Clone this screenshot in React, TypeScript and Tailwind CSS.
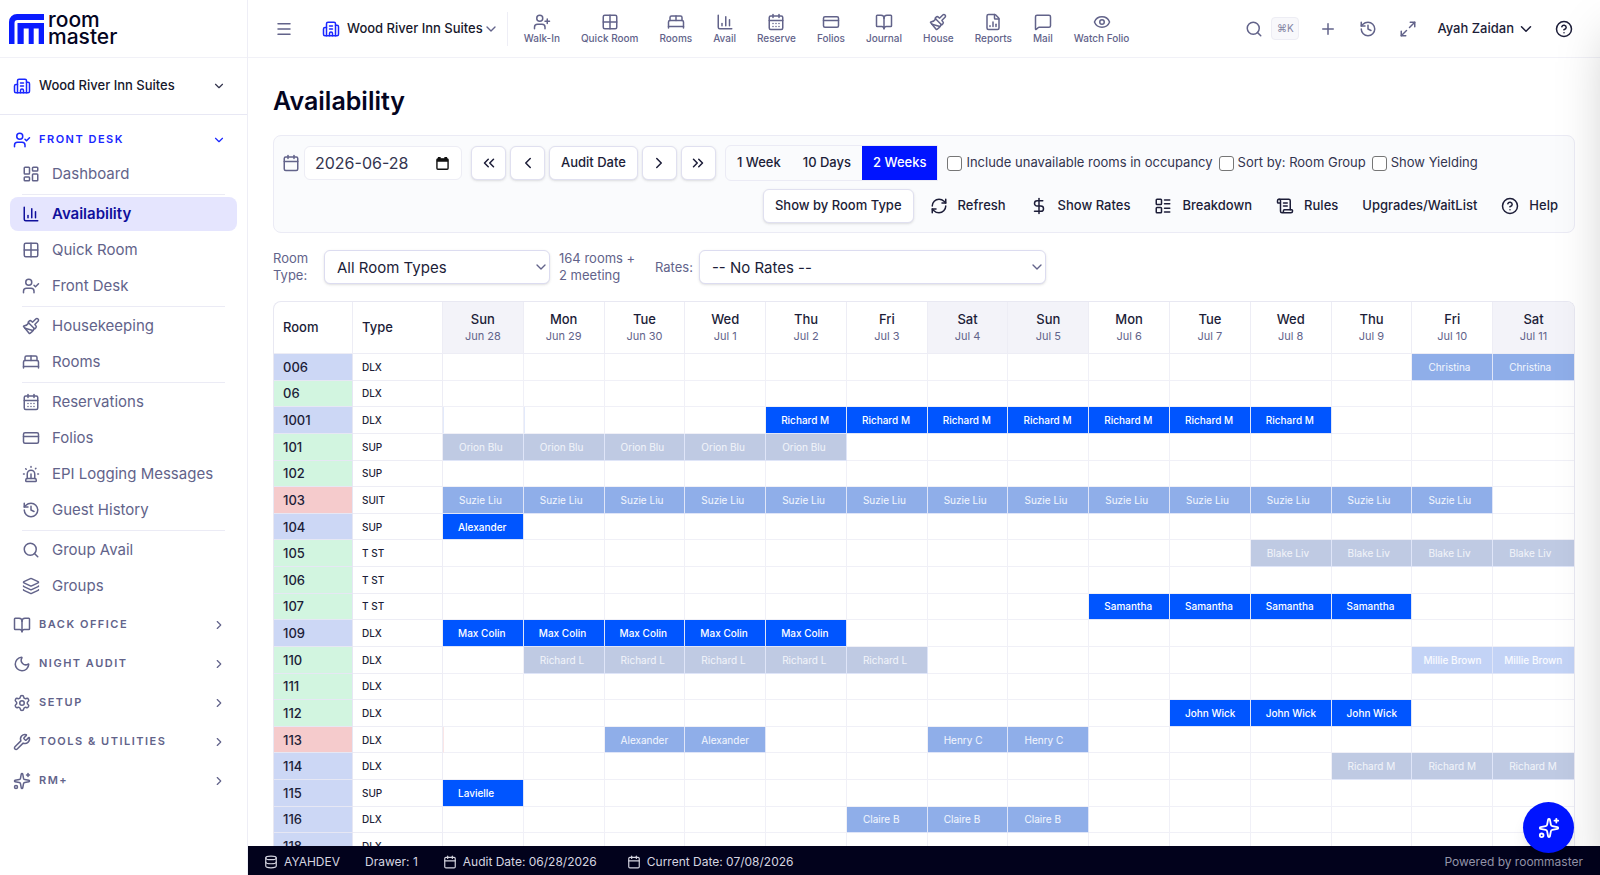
import type { ComponentType, ReactNode } from 'react'
import {
  BedDouble, BookOpen, Building2, Calendar, CalendarDays, ChartColumn, ChevronDown, ChevronLeft,
  ChevronRight, ChevronsLeft, ChevronsRight, CircleHelp, CreditCard, Database, DollarSign, Eye,
  FileChartColumn, Grid2x2, History, Layers, LayoutDashboard, LayoutList, Maximize2, Menu,
  MessageSquare, Moon, Paintbrush, Plus, RefreshCw, ScrollText, Search, Settings, Siren, Sparkles,
  UserCheck, UserPlus, Wrench,
} from 'lucide-react'

type Icon = ComponentType<{ className?: string }>

const QUICK_LINKS: { label: string; icon: Icon }[] = [
  { label: 'Walk-In', icon: UserPlus },
  { label: 'Quick Room', icon: Grid2x2 },
  { label: 'Rooms', icon: BedDouble },
  { label: 'Avail', icon: ChartColumn },
  { label: 'Reserve', icon: CalendarDays },
  { label: 'Folios', icon: CreditCard },
  { label: 'Journal', icon: BookOpen },
  { label: 'House', icon: Paintbrush },
  { label: 'Reports', icon: FileChartColumn },
  { label: 'Mail', icon: MessageSquare },
  { label: 'Watch Folio', icon: Eye },
]

const MENU: { label: string; icon: Icon }[][] = [
  [{ label: 'Dashboard', icon: LayoutDashboard }],
  [
    { label: 'Availability', icon: ChartColumn },
    { label: 'Quick Room', icon: Grid2x2 },
    { label: 'Front Desk', icon: UserCheck },
  ],
  [
    { label: 'Housekeeping', icon: Paintbrush },
    { label: 'Rooms', icon: BedDouble },
  ],
  [
    { label: 'Reservations', icon: CalendarDays },
    { label: 'Folios', icon: CreditCard },
    { label: 'EPI Logging Messages', icon: Siren },
    { label: 'Guest History', icon: History },
  ],
  [
    { label: 'Group Avail', icon: Search },
    { label: 'Groups', icon: Layers },
  ],
]

const SECTIONS: { label: string; icon: Icon }[] = [
  { label: 'BACK OFFICE', icon: BookOpen },
  { label: 'NIGHT AUDIT', icon: Moon },
  { label: 'SETUP', icon: Settings },
  { label: 'TOOLS & UTILITIES', icon: Wrench },
  { label: 'RM+', icon: Sparkles },
]

const DAYS = [
  ['Sun', 'Jun 28'], ['Mon', 'Jun 29'], ['Tue', 'Jun 30'], ['Wed', 'Jul 1'], ['Thu', 'Jul 2'],
  ['Fri', 'Jul 3'], ['Sat', 'Jul 4'], ['Sun', 'Jul 5'], ['Mon', 'Jul 6'], ['Tue', 'Jul 7'],
  ['Wed', 'Jul 8'], ['Thu', 'Jul 9'], ['Fri', 'Jul 10'], ['Sat', 'Jul 11'],
]

const ROOM_TONES = {
  blue: 'bg-[#ccd7f5]',
  green: 'bg-[#d2f5e0]',
  red: 'bg-[#f5cbcc]',
}

const STAY_TONES = {
  inHouse: 'bg-[#0055ff] pl-[15px] font-medium text-white',
  reserved: 'bg-[#8faee9] pl-4 text-white/90',
  departed: 'bg-[#bfcae3] pl-4 text-white/80',
  tentative: 'bg-[#c3d3f6] pl-[11px] font-medium text-white/90',
}

type Stay = { guest: string; from: number; to: number; tone: keyof typeof STAY_TONES }
type RoomRow = {
  room: string
  type: string
  tone: keyof typeof ROOM_TONES
  stays?: Stay[]
  // days whose left edge carries a thin coloured marker
  marked?: { days: number[]; className: string }
}

const ROOMS: RoomRow[] = [
  { room: '006', type: 'DLX', tone: 'blue', stays: [{ guest: 'Christina', from: 12, to: 13, tone: 'reserved' }] },
  { room: '06', type: 'DLX', tone: 'green' },
  {
    room: '1001',
    type: 'DLX',
    tone: 'blue',
    stays: [{ guest: 'Richard M', from: 4, to: 10, tone: 'inHouse' }],
    marked: { days: [0, 1], className: 'border-l border-l-[#e3eafb]' },
  },
  { room: '101', type: 'SUP', tone: 'green', stays: [{ guest: 'Orion Blu', from: 0, to: 4, tone: 'departed' }] },
  { room: '102', type: 'SUP', tone: 'green' },
  { room: '103', type: 'SUIT', tone: 'red', stays: [{ guest: 'Suzie Liu', from: 0, to: 12, tone: 'reserved' }] },
  { room: '104', type: 'SUP', tone: 'blue', stays: [{ guest: 'Alexander', from: 0, to: 0, tone: 'inHouse' }] },
  { room: '105', type: 'T ST', tone: 'green', stays: [{ guest: 'Blake Liv', from: 10, to: 13, tone: 'departed' }] },
  { room: '106', type: 'T ST', tone: 'green' },
  { room: '107', type: 'T ST', tone: 'green', stays: [{ guest: 'Samantha', from: 8, to: 11, tone: 'inHouse' }] },
  { room: '109', type: 'DLX', tone: 'blue', stays: [{ guest: 'Max Colin', from: 0, to: 4, tone: 'inHouse' }] },
  {
    room: '110',
    type: 'DLX',
    tone: 'green',
    stays: [
      { guest: 'Richard L', from: 1, to: 5, tone: 'departed' },
      { guest: 'Millie Brown', from: 12, to: 13, tone: 'tentative' },
    ],
  },
  { room: '111', type: 'DLX', tone: 'green' },
  { room: '112', type: 'DLX', tone: 'green', stays: [{ guest: 'John Wick', from: 9, to: 11, tone: 'inHouse' }] },
  {
    room: '113',
    type: 'DLX',
    tone: 'red',
    stays: [
      { guest: 'Alexander', from: 2, to: 3, tone: 'reserved' },
      { guest: 'Henry C', from: 6, to: 7, tone: 'reserved' },
    ],
    marked: { days: [0], className: 'border-l border-l-[#fae6e7]' },
  },
  { room: '114', type: 'DLX', tone: 'blue', stays: [{ guest: 'Richard M', from: 11, to: 13, tone: 'departed' }] },
  { room: '115', type: 'SUP', tone: 'blue', stays: [{ guest: 'Lavielle', from: 0, to: 0, tone: 'inHouse' }] },
  { room: '116', type: 'DLX', tone: 'blue', stays: [{ guest: 'Claire B', from: 5, to: 7, tone: 'reserved' }] },
  { room: '118', type: 'DLX', tone: 'blue' },
]

function Logo() {
  return (
    <a href="#" aria-label="roommaster home" className="flex h-[58px] shrink-0 items-center gap-1 border-b border-[#f1f1f7] pl-[9px]">
      <svg viewBox="0 0 35 30" className="h-[30px] w-[35px] shrink-0" fill="#0a1cff">
        <path d="M0 30V8a8 8 0 0 1 8-8h27v6H8.500a3 3 0 0 0-3 3v21z" />
        <path d="M8.500 30V9H35v21h-5.300V14.500h-5V30h-5V14.500h-5V30z" />
      </svg>
      <span className="flex flex-col pb-0.5 text-[21px] leading-[17px] font-medium text-[#04051f]">
        <span>room</span>
        <span>master</span>
      </span>
    </a>
  )
}

function Sidebar() {
  return (
    <aside className="flex w-[248px] shrink-0 flex-col border-r border-[#eeeef6] bg-white">
      <Logo />
      <button type="button" className="flex h-[57px] shrink-0 items-center border-b border-[#e8e8f4] pr-[21px] pl-[13px]">
        <Building2 className="size-[18px] text-[#1a27ff]" />
        <span className="ml-2 text-[13px] font-medium text-[#17182b]">Wood River Inn Suites</span>
        <ChevronDown className="ml-auto size-3.5 text-[#33344d]" />
      </button>
      <nav className="flex flex-col gap-1.5 pt-2">
        <div className="-mb-0.5">
          <button type="button" className="flex h-[33px] w-full items-center pr-[21px] pl-[13px] text-[#1a27ff]">
            <UserCheck className="size-[18px]" />
            <span className="ml-2 text-[11px] font-semibold tracking-[1.5px]">FRONT DESK</span>
            <ChevronDown className="ml-auto size-3.5" />
          </button>
          {MENU.map((items, i) => (
            <div key={i}>
              {i > 0 && <hr className="mx-[22px] mt-0.5 mb-px h-px border-0 bg-[#ebebf5]" />}
              {items.map(({ label, icon: ItemIcon }) => (
                <div key={label} className="px-2.5 py-px">
                  <a
                    href="#"
                    className={
                      label === 'Availability'
                        ? 'flex h-[34px] items-center gap-3 rounded-lg bg-[#e5e5fe] pl-3 text-[15px] font-semibold text-[#10109c]'
                        : 'flex h-[34px] items-center gap-3 rounded-lg pl-3 text-[15px] text-[#62638a]'
                    }
                  >
                    <ItemIcon className="size-[18px]" />
                    {label}
                  </a>
                </div>
              ))}
            </div>
          ))}
        </div>
        {SECTIONS.map(({ label, icon: SectionIcon }) => (
          <button key={label} type="button" className="flex h-[33px] w-full items-center pr-[21px] pl-[13px] text-[#62638a]">
            <SectionIcon className="size-[18px]" />
            <span className="ml-2 text-[11px] font-semibold tracking-[1.5px]">{label}</span>
            <ChevronRight className="ml-auto size-3.5" />
          </button>
        ))}
      </nav>
    </aside>
  )
}

function TopBar() {
  return (
    <header className="flex h-[58px] shrink-0 items-center border-b border-[#f1f1f7] pr-[27px] pl-[27px] text-[#62638a]">
      <button type="button" aria-label="Toggle menu">
        <Menu className="size-[18px]" />
      </button>
      <button type="button" className="ml-[29px] flex items-center whitespace-nowrap">
        <Building2 className="size-[18px] text-[#1a27ff]" />
        <span className="ml-[7px] text-[13px] font-medium text-[#17182b]">Wood River Inn Suites</span>
        <ChevronDown className="size-4" />
      </button>
      <nav className="ml-2 flex h-[34px] items-center gap-[5px] border-l border-[#eeeef6] pl-2">
        {QUICK_LINKS.map(({ label, icon: LinkIcon }) => (
          <a key={label} href="#" className="flex flex-col items-center px-2 text-[10px] leading-[14px] font-medium whitespace-nowrap">
            <LinkIcon className="size-[18px]" />
            {label}
          </a>
        ))}
      </nav>
      <div className="ml-auto flex items-center text-[#62638a]">
        <button type="button" className="flex items-center gap-2" aria-label="Search">
          <Search className="size-[18px]" />
          <kbd className="flex h-[23px] w-7 items-center justify-center rounded border border-[#ededf4] bg-[#f8f8fb] font-[Inter] text-[10px] text-[#8384a3]">
            ⌘K
          </kbd>
        </button>
        <button type="button" aria-label="Add" className="ml-5">
          <Plus className="size-[18px]" />
        </button>
        <button type="button" aria-label="History" className="ml-[22px]">
          <History className="size-[18px]" />
        </button>
        <button type="button" aria-label="Full screen" className="ml-[22px]">
          <Maximize2 className="size-[18px]" />
        </button>
        <button type="button" className="ml-5 flex items-center gap-[3px] text-[13px] font-medium whitespace-nowrap text-[#1c1d38]">
          Ayah Zaidan
          <ChevronDown className="size-[18px]" />
        </button>
        <button type="button" aria-label="Help" className="ml-5 text-[#1c1d38]">
          <CircleHelp className="size-[18px]" />
        </button>
      </div>
    </header>
  )
}

function NavButton({ label, children }: { label?: string; children: ReactNode }) {
  return (
    <button
      type="button"
      aria-label={label}
      className="flex h-[34px] min-w-[35px] items-center justify-center rounded-md border border-[#e0e0f0] bg-white text-[13px] font-medium whitespace-nowrap text-[#1c1d38] shadow-sm"
    >
      {children}
    </button>
  )
}

function GhostButton({ icon: ButtonIcon, children }: { icon?: Icon; children: ReactNode }) {
  return (
    <button type="button" className="flex h-[34px] items-center gap-2.5 px-2 text-[13px] font-medium whitespace-nowrap text-[#1c1d38]">
      {ButtonIcon && <ButtonIcon className="size-[18px]" />}
      {children}
    </button>
  )
}

function CheckOption({ label }: { label: string }) {
  return (
    <label className="flex items-center gap-1 text-[13px] whitespace-nowrap text-[#33344f]">
      <input type="checkbox" className="size-[15px] appearance-none rounded-[3px] border border-[#767676] bg-white" />
      {label}
    </label>
  )
}

function Toolbar() {
  return (
    <section className="rounded-lg border border-[#ebebf5] bg-[#fafbfd] px-2 py-[9px]">
      <div className="flex items-center gap-[9px]">
        <div className="flex items-center gap-1">
          <Calendar className="size-[18px] text-[#62638a]" />
          <div className="flex h-[34px] w-[158px] items-center justify-between rounded-md border border-[#ededf5] bg-white pr-3 pl-2.5">
            <input type="text" aria-label="Start date" defaultValue="2026-06-28" className="w-[110px] bg-transparent text-base text-[#33344f] outline-none" />
            <button type="button" aria-label="Open calendar">
              <svg viewBox="0 0 14 14" className="size-[13px]" fill="none" stroke="#111" strokeWidth="1.5">
                <rect x="1" y="2" width="12" height="11.2" rx="1" />
                <path d="M1 3.5h12M3.5 0v3M10.5 0v3" strokeWidth="3" />
              </svg>
            </button>
          </div>
        </div>
        <div className="flex items-center gap-1">
          <NavButton label="Back one period"><ChevronsLeft className="size-[18px]" /></NavButton>
          <NavButton label="Back one day"><ChevronLeft className="size-[18px]" /></NavButton>
          <NavButton><span className="px-[11px]">Audit Date</span></NavButton>
          <NavButton label="Forward one day"><ChevronRight className="size-[18px]" /></NavButton>
          <NavButton label="Forward one period"><ChevronsRight className="size-[18px]" /></NavButton>
        </div>
        <div className="flex h-9 overflow-hidden rounded-l-md border border-[#ebebf5] text-[13px] font-medium whitespace-nowrap text-[#1c1d38]">
          <button type="button" className="px-[11px]">1 Week</button>
          <button type="button" className="px-[11px]">10 Days</button>
          <button type="button" className="bg-[#0014ff] px-[11px] text-white">2 Weeks</button>
        </div>
        <div className="flex items-center gap-1.5">
          <CheckOption label="Include unavailable rooms in occupancy" />
          <CheckOption label="Sort by: Room Group" />
          <CheckOption label="Show Yielding" />
        </div>
      </div>
      <div className="mt-2 flex items-center justify-end gap-2">
        <NavButton><span className="px-[11px]">Show by Room Type</span></NavButton>
        <GhostButton icon={RefreshCw}>Refresh</GhostButton>
        <GhostButton icon={DollarSign}>Show Rates</GhostButton>
        <GhostButton icon={LayoutList}>Breakdown</GhostButton>
        <GhostButton icon={ScrollText}>Rules</GhostButton>
        <GhostButton>Upgrades/WaitList</GhostButton>
        <GhostButton icon={CircleHelp}>Help</GhostButton>
      </div>
    </section>
  )
}

function Filters() {
  return (
    <div className="mt-[17px] flex items-center text-[13px] leading-[17px] text-[#62638a]">
      <label htmlFor="roomType" className="w-[51px]">Room Type:</label>
      <div className="relative">
        <select id="roomType" className="h-[34px] w-[226px] appearance-none rounded-md border border-[#dcdcf0] bg-white pl-3 text-[15px] text-[#1c1d38] shadow-sm">
          <option>All Room Types</option>
        </select>
        <ChevronDown className="pointer-events-none absolute top-[9px] right-px size-4" />
      </div>
      <span className="ml-[9px] w-24">
        164 rooms +<br />2 meeting
      </span>
      <label htmlFor="rates" className="mr-1.5">Rates:</label>
      <div className="relative">
        <select id="rates" className="h-[34px] w-[347px] appearance-none rounded-md border border-[#dcdcf0] bg-white pl-3 text-[15px] text-[#1c1d38] shadow-sm">
          <option>-- No Rates --</option>
        </select>
        <ChevronDown className="pointer-events-none absolute top-[9px] right-px size-4" />
      </div>
    </div>
  )
}

function AvailabilityGrid() {
  return (
    <div className="mt-[17px] min-h-0 flex-1 overflow-hidden rounded-t-lg border-x border-t border-[#e8e8f2]">
      <table className="h-[558px] w-full table-fixed border-separate border-spacing-0 text-left">
        <thead>
          <tr className="h-[52px] text-[13px] text-[#1c1d38]">
            <th className="w-[79px] border-r border-b border-[#ededf5] pl-[9px] font-medium">Room</th>
            <th className="w-[90px] border-r border-b border-[#ededf5] pl-[9px] font-medium">Type</th>
            {DAYS.map(([day, date]) => (
              <th
                key={date}
                className={
                  day[0] === 'S'
                    ? 'border-r border-b border-[#ededf5] bg-[#f3f3f9] p-0 text-center leading-[17px] font-medium last:border-r-0'
                    : 'border-r border-b border-[#ededf5] p-0 text-center leading-[17px] font-medium last:border-r-0'
                }
              >
                {day}
                <span className="block text-[11px] font-normal text-[#62638a]">{date}</span>
              </th>
            ))}
          </tr>
        </thead>
        <tbody>
          {ROOMS.map(({ room, type, tone, stays = [], marked }) => (
            <tr key={room} className="h-[26px]">
              <th className={`${ROOM_TONES[tone]} border-r border-b border-[#e6e7f4] py-0 pl-[9px] text-[13px] leading-4 font-medium text-[#1c1d38]`}>
                {room}
              </th>
              <td className="border-r border-b border-[#ededf5] py-0 pl-[9px] text-[10px] leading-4 font-medium text-[#1c1d38]">{type}</td>
              {DAYS.map(([, date], day) => {
                const stay = stays.find((s) => day >= s.from && day <= s.to)
                if (stay) {
                  return (
                    <td key={date} className={`${STAY_TONES[stay.tone]} overflow-hidden border-r border-b border-[#dfe5f8] py-0 text-[10px] leading-4 whitespace-nowrap last:border-r-0`}>
                      {stay.guest}
                    </td>
                  )
                }
                return (
                  <td
                    key={date}
                    className={`${marked?.days.includes(day) ? marked.className : ''} border-r border-b border-r-[#f0f0f7] border-b-[#f0f0f7] p-0 last:border-r-0`}
                  />
                )
              })}
            </tr>
          ))}
        </tbody>
      </table>
    </div>
  )
}

function StatusBar() {
  return (
    <footer className="flex h-[29px] shrink-0 items-center bg-[#02021c] pt-[3px] pr-[17px] pl-4 text-xs text-[#d5d5e0]">
      <Database className="mr-1.5 size-3.5" />
      <span>AYAHDEV</span>
      <span className="ml-[25px]">Drawer: 1</span>
      <Calendar className="mr-1.5 ml-[25px] size-3.5" />
      <span>Audit Date: 06/28/2026</span>
      <Calendar className="mr-1.5 ml-[30px] size-3.5" />
      <span>Current Date: 07/08/2026</span>
      <span className="ml-auto text-[#9293a8]">Powered by roommaster</span>
    </footer>
  )
}

export default function App() {
  return (
    <div className="relative flex h-screen overflow-hidden bg-white font-[Inter,sans-serif]">
      <Sidebar />
      <div className="flex min-w-0 flex-1 flex-col">
        <TopBar />
        <main className="flex min-h-0 flex-1 flex-col px-[25px] pt-[25px]">
          <h1 className="mb-4 text-[25px] leading-9 font-semibold text-[#04051f]">Availability</h1>
          <Toolbar />
          <Filters />
          <AvailabilityGrid />
        </main>
        <StatusBar />
      </div>
      {/* closed drawer, only its shadow reaches the page */}
      <div className="pointer-events-none absolute inset-y-0 left-full w-96 shadow-2xl" />
      <button
        type="button"
        aria-label="Assistant"
        className="absolute right-[26px] bottom-[22px] flex size-[51px] items-center justify-center rounded-full bg-[#0014ff] text-white shadow-lg"
      >
        <Sparkles className="size-[22px]" />
      </button>
    </div>
  )
}
